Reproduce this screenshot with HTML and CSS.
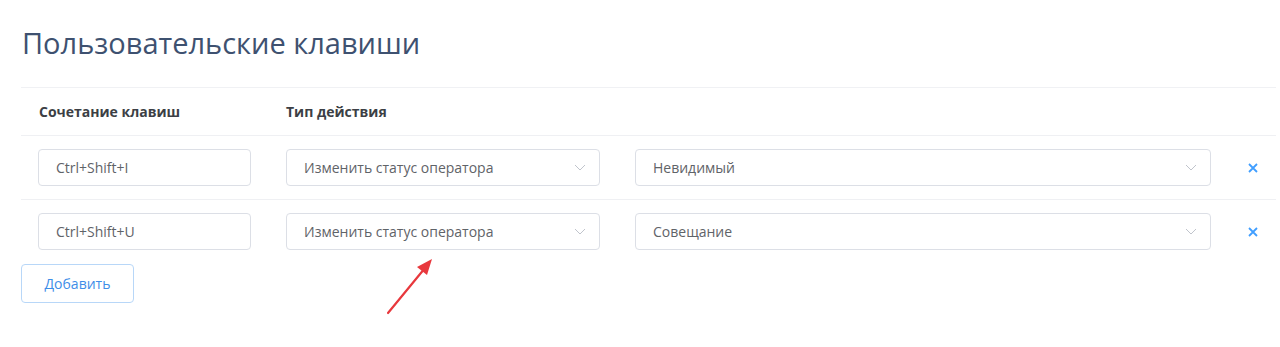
FILE: index.html
```html
<!DOCTYPE html>
<html lang="ru">
<head>
    <meta charset="UTF-8">
    <meta name="viewport" content="width=device-width, initial-scale=1.0">
    <title>Пользовательские клавиши</title>
    <link rel="stylesheet" href="styles.css">
</head>
<body>
    <div class="page">
        <h1 class="page-title">Пользовательские клавиши</h1>

        <div class="hotkeys">
            <div class="hotkeys-row hotkeys-head">
                <div>Сочетание клавиш</div>
                <div>Тип действия</div>
                <div></div>
                <div></div>
            </div>

            <div class="hotkeys-row">
                <div class="field">Ctrl+Shift+I</div>
                <div class="field select">
                    <span>Изменить статус оператора</span>
                    <svg class="chevron" width="12" height="7" viewBox="0 0 12 7"><polyline points="1,1 6,6 11,1" fill="none" stroke="#c0c4cc" stroke-width="1"/></svg>
                </div>
                <div class="field select">
                    <span>Невидимый</span>
                    <svg class="chevron" width="12" height="7" viewBox="0 0 12 7"><polyline points="1,1 6,6 11,1" fill="none" stroke="#c0c4cc" stroke-width="1"/></svg>
                </div>
                <div class="remove">
                    <svg width="10" height="10" viewBox="0 0 10 10"><path d="M1 1 L9 9 M9 1 L1 9" stroke="#409eff" stroke-width="1.8"/></svg>
                </div>
            </div>

            <div class="hotkeys-row">
                <div class="field">Ctrl+Shift+U</div>
                <div class="field select">
                    <span>Изменить статус оператора</span>
                    <svg class="chevron" width="12" height="7" viewBox="0 0 12 7"><polyline points="1,1 6,6 11,1" fill="none" stroke="#c0c4cc" stroke-width="1"/></svg>
                </div>
                <div class="field select">
                    <span>Совещание</span>
                    <svg class="chevron" width="12" height="7" viewBox="0 0 12 7"><polyline points="1,1 6,6 11,1" fill="none" stroke="#c0c4cc" stroke-width="1"/></svg>
                </div>
                <div class="remove">
                    <svg width="10" height="10" viewBox="0 0 10 10"><path d="M1 1 L9 9 M9 1 L1 9" stroke="#409eff" stroke-width="1.8"/></svg>
                </div>
            </div>
        </div>

        <button class="add-btn">Добавить</button>
    </div>

    <!-- annotation arrow from the screenshot -->
    <svg class="arrow" width="60" height="70" viewBox="0 0 60 70">
        <line x1="13" y1="66" x2="50" y2="21" stroke="#e8383d" stroke-width="2.2" stroke-linecap="round"/>
        <polygon points="57,12 42,20 52,28" fill="#e8383d"/>
    </svg>
</body>
</html>
```

FILE: styles.css
```css
body {
    margin: 0;
    font-family: "Open Sans", sans-serif;
    background-color: #fff;
    color: #606266;
}

.page {
    padding: 0 4px 0 21px;
}

.page-title {
    margin: 0;
    padding: 25px 0 0 1px;
    height: 87px;
    box-sizing: border-box;
    font-size: 29px;
    font-weight: 400;
    line-height: 36px;
    color: #3e5170;
}

.hotkeys {
    border-top: 1px solid #f0f1f4;
}

.hotkeys-row {
    display: grid;
    grid-template-columns: 213px 314px 576px 1fr;
    column-gap: 35px;
    align-items: center;
    padding: 13px 0 13px 17px;
    border-top: 1px solid #eff0f3;
}

.hotkeys-row:first-child {
    border-top: none;
}

.hotkeys-head {
    height: 47px;
    box-sizing: border-box;
    padding-top: 0;
    padding-bottom: 0;
    font-size: 14px;
    font-weight: 700;
    color: #3c3f45;
}

.hotkeys-head div:first-child {
    padding-left: 1px;
}

.field {
    height: 37px;
    box-sizing: border-box;
    border: 1px solid #dcdfe6;
    border-radius: 4px;
    padding: 0 15px 0 17px;
    display: flex;
    align-items: center;
    font-size: 14px;
    color: #5f6368;
}

.select {
    justify-content: space-between;
}

.chevron {
    margin-right: -2px;
}

.remove {
    display: flex;
    padding-left: 2px;
}

.add-btn {
    margin-top: 1px;
    width: 113px;
    height: 39px;
    border: 1px solid #b8d7f8;
    border-radius: 4px;
    background-color: #fff;
    color: #3e8ee8;
    font-family: "Open Sans", sans-serif;
    font-size: 14px;
}

.arrow {
    position: absolute;
    left: 375px;
    top: 247px;
}
```
